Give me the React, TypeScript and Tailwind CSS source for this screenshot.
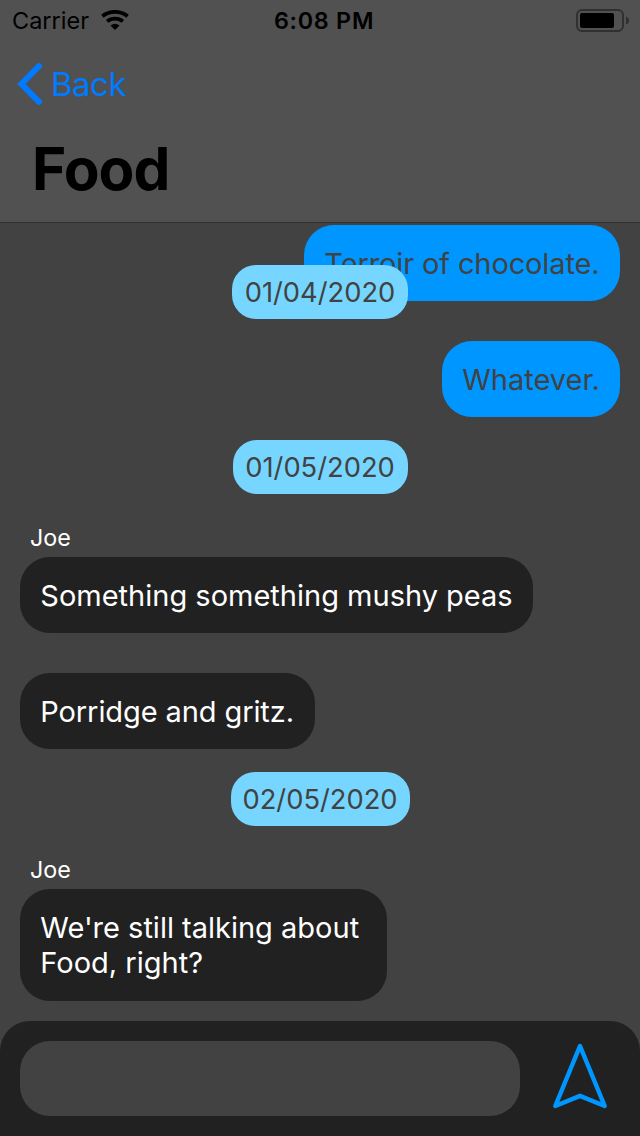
import type { ReactNode } from "react";

function StatusBar() {
  return (
    <div className="grid h-10 grid-cols-[1fr_auto_1fr] items-center pr-[11px] pl-[12px] text-black">
      <div className="flex w-[117px] items-center justify-between">
        <span className="pt-[2px] text-[23.500px] leading-[36px]">Carrier</span>
        <svg width="28" height="20" viewBox="0 0 28 20" fill="none" stroke="currentColor">
          <path d="M1.400 6.200C8.400 .4 19.600 .4 26.600 6.200" strokeWidth="3.800" />
          <path d="M6.200 11.400C10.500 7.700 17.500 7.700 21.800 11.400" strokeWidth="3.800" />
          <path d="M14 20L9.500 15.500Q14 11.900 18.500 15.500Z" fill="currentColor" stroke="none" />
        </svg>
      </div>
      <span className="pt-[2px] pl-[7px] text-[23.300px] leading-[36px] font-semibold tracking-[0.750px]">6:08 PM</span>
      <svg className="justify-self-end" width="53" height="24" viewBox="0 0 53 24" fill="none">
        <rect x="1" y="2" width="46" height="21" rx="5" stroke="#303030" strokeWidth="2" />
        <rect x="4" y="5" width="34" height="15" rx="2" fill="#000" />
        <path d="M50 8.500Q53 9.500 53 12.500T50 16.500Z" fill="#303030" />
      </svg>
    </div>
  );
}

function Header() {
  return (
    <header className="h-[223px] border-b border-[#303030] bg-[#515151]">
      <StatusBar />
      <button className="flex h-[88px] items-center gap-[8px] pl-[17px] text-[#007aff]">
        <svg width="26" height="44" viewBox="0 0 26 44" fill="none" stroke="currentColor" strokeWidth="6" strokeLinecap="round" strokeLinejoin="miter">
          <path d="M22 4.200L4.500 22L22 39.800" />
        </svg>
        <span className="text-[33px] leading-[40px] tracking-[-0.5px]">Back</span>
      </button>
      <h1 className="pt-[1px] pl-[32px] text-[58.500px] leading-[80px] font-bold tracking-[-1px] text-black">Food</h1>
    </header>
  );
}

function DateTag({ children, className }: { children: ReactNode; className: string }) {
  return (
    <div className={`relative flex h-[54px] items-center justify-center self-center rounded-[24px] bg-[#76d6ff] pt-[2px] text-[27.300px] leading-[34px] whitespace-nowrap text-[#424242] ${className}`}>
      {children}
    </div>
  );
}

function Bubble({ children, className }: { children: ReactNode; className: string }) {
  return (
    <div className={`rounded-[30px] px-[20.300px] pt-[21px] text-[29px] leading-[35px] whitespace-nowrap ${className}`}>
      {children}
    </div>
  );
}

const sent = "self-end bg-[#0096ff] text-[#424242]";
const received = "self-start bg-[#212121] text-white";

export default function App() {
  return (
    <div className="flex h-[1136px] w-[640px] flex-col overflow-hidden bg-[#424242] font-['Inter',sans-serif]">
      <Header />
      <main className="flex h-[798px] flex-col px-[20px] pt-[2px]">
        <Bubble className={`h-[76px] w-[316px] tracking-[-0.120px] ${sent}`}>Terroir of chocolate.</Bubble>
        <DateTag className="mt-[-36px] w-[176px]">01/04/2020</DateTag>
        <Bubble className={`mt-[22px] h-[76px] w-[178px] ${sent}`}>Whatever.</Bubble>
        <DateTag className="mt-[23px] w-[175px]">01/05/2020</DateTag>
        <span className="mt-[29px] pl-[10px] text-[23.300px] leading-[30px] text-white">Joe</span>
        <Bubble className={`mt-[4px] h-[76px] w-[513px] ${received}`}>Something something mushy peas</Bubble>
        <Bubble className={`mt-[40px] h-[76px] w-[295px] tracking-[-0.1px] ${received}`}>Porridge and gritz.</Bubble>
        <DateTag className="mt-[23px] w-[179px]">02/05/2020</DateTag>
        <span className="mt-[29px] pl-[10px] text-[23.300px] leading-[30px] text-white">Joe</span>
        <Bubble className={`mt-[4px] h-[112px] w-[367px] ${received}`}>
          We're still talking about
          <br />
          Food, right?
        </Bubble>
      </main>
      <footer className="flex h-[115px] items-start rounded-t-[30px] bg-[#212121] pt-[20px] pl-[20px]">
        <input aria-label="Message" className="h-[75px] w-[500px] rounded-[30px] bg-[#424242] px-5 text-[29px] text-white outline-none" />
        <button aria-label="Send" className="ml-[32px] text-[#0096ff]">
          <svg width="56" height="70" viewBox="0 0 56 70" fill="none" stroke="currentColor" strokeWidth="4.500" strokeLinecap="round" strokeLinejoin="round">
            <path d="M28 5L3.300 65L28 54.800L52.700 65Z" />
          </svg>
        </button>
      </footer>
    </div>
  );
}
